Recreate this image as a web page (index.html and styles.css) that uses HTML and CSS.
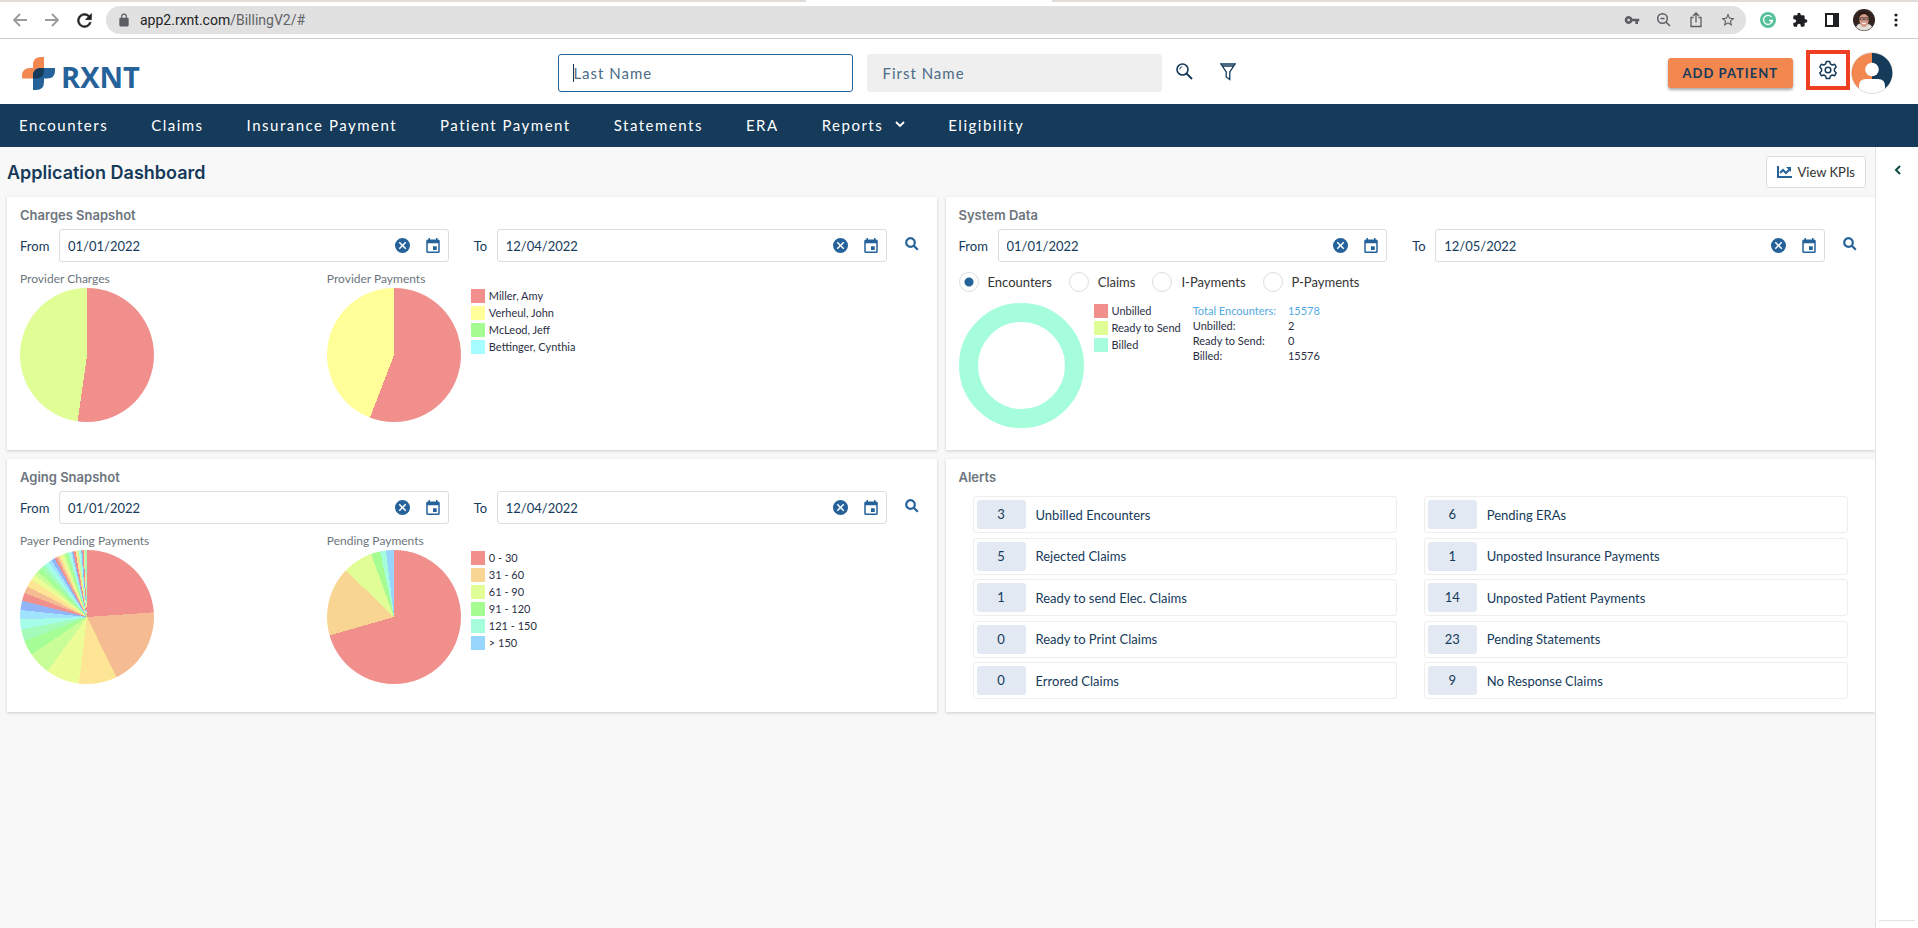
FILE: index.html
```html
<!DOCTYPE html>
<html lang="en">
<head>
    <meta charset="UTF-8">
    <meta name="viewport" content="width=device-width, initial-scale=1.0">
    <title>RXNT Billing</title>
    <link rel="stylesheet" href="styles.css">
</head>
<body>
    <!-- Shared icons -->
    <svg class="sprite" aria-hidden="true">
        <symbol id="clear" viewBox="2 2 20 20">
            <path d="M12 2a10 10 0 1 0 0 20 10 10 0 0 0 0-20zm5 13.600L15.600 17 12 13.400 8.400 17 7 15.600l3.600-3.600L7 8.400 8.400 7l3.600 3.600L15.600 7 17 8.400 13.400 12z"/>
        </symbol>
        <symbol id="calendar" viewBox="3 1 18 20">
            <path d="M17 12h-5v5h5v-5zM16 1v2H8V1H6v2H5a2 2 0 0 0-2 2v14a2 2 0 0 0 2 2h14a2 2 0 0 0 2-2V5a2 2 0 0 0-2-2h-1V1h-2zm3 18H5V8h14v11z"/>
        </symbol>
        <symbol id="search" viewBox="0 0 14 14">
            <path d="M5.500 1.200a4.300 4.300 0 1 0 0 8.600 4.300 4.300 0 0 0 0-8.600zM8.800 8.800l4 4" fill="none" stroke="currentColor" stroke-width="2.200"/>
        </symbol>
    </svg>

    <div class="tab-strip"><div class="active-tab"></div></div>
    <div class="browser-bar">
        <button class="browser-button faded" aria-label="Back"><svg width="16" height="16" viewBox="0 0 16 16"><path d="M15 8H2M8 2L2 8l6 6" fill="none" stroke="currentColor" stroke-width="1.800"/></svg></button>
        <button class="browser-button faded" aria-label="Forward"><svg width="16" height="16" viewBox="0 0 16 16"><path d="M1 8h13M8 2l6 6-6 6" fill="none" stroke="currentColor" stroke-width="1.800"/></svg></button>
        <button class="browser-button" aria-label="Reload"><svg width="21" height="21" viewBox="0 0 24 24"><path d="M17.650 6.350A8 8 0 1 0 19.730 14h-2.080A6 6 0 1 1 16.220 7.780L13 11h7V4l-2.350 2.350z" stroke="currentColor" stroke-width=".6"/></svg></button>
        <div class="address">
            <span class="address-icon"><svg width="14" height="14" viewBox="0 0 24 24"><path d="M18 8h-1V6A5 5 0 0 0 7 6v2H6a2 2 0 0 0-2 2v11a2 2 0 0 0 2 2h12a2 2 0 0 0 2-2V10a2 2 0 0 0-2-2zM9 8V6a3 3 0 0 1 6 0v2z"/></svg></span>
            <span class="url">app2.rxnt.com<span class="url-path">/BillingV2/#</span></span>
            <button class="browser-button" aria-label="Passwords"><svg width="16" height="16" viewBox="0 0 24 24"><path d="M12.650 10A6 6 0 1 0 12.650 14H17v4h4v-4h2v-4H12.650zM7 14a2 2 0 1 1 0-4 2 2 0 0 1 0 4z"/></svg></button>
            <button class="browser-button" aria-label="Zoom"><svg width="16" height="16" viewBox="0 0 16 16" fill="none" stroke="currentColor" stroke-width="1.500"><circle cx="6.500" cy="6.500" r="4.800"/><path d="M10 10l4 4M4.500 6.500h4"/></svg></button>
            <button class="browser-button" aria-label="Share"><svg width="16" height="16" viewBox="0 0 16 16" fill="none" stroke="currentColor" stroke-width="1.300"><path d="M5.500 5.500H3v9h10v-9h-2.500M8 10.500V1.500M5 4l3-3 3 3"/></svg></button>
            <button class="browser-button" aria-label="Bookmark"><svg width="16" height="16" viewBox="0 0 24 24"><path d="M22 9.240l-7.190-.62L12 2 9.190 8.630 2 9.240l5.460 4.730L5.820 21 12 17.270 18.180 21l-1.630-7.030L22 9.240zM12 15.400l-3.760 2.270 1-4.280-3.320-2.880 4.380-.38L12 6.100l1.710 4.040 4.380.38-3.320 2.880 1 4.280L12 15.400z"/></svg></button>
        </div>
        <button class="browser-button" aria-label="Writing assistant"><svg width="18" height="18" viewBox="0 0 18 18"><circle cx="9" cy="9" r="8" fill="#56c19a"/><path d="M12.500 6a4.500 4.500 0 1 0 1 3.500H10M12 11.500l1.500-2" fill="none" stroke="#fff" stroke-width="1.300"/></svg></button>
        <button class="browser-button" aria-label="Extensions"><svg width="16" height="16" viewBox="0 0 24 24"><path d="M20.500 11H19V7a2 2 0 0 0-2-2h-4V3.500a2.500 2.500 0 0 0-5 0V5H4a2 2 0 0 0-2 2v3.800h1.500a2.700 2.700 0 0 1 0 5.400H2V20a2 2 0 0 0 2 2h3.800v-1.500a2.700 2.700 0 0 1 5.400 0V22H17a2 2 0 0 0 2-2v-4h1.500a2.500 2.500 0 0 0 0-5z"/></svg></button>
        <button class="browser-button" aria-label="Side panel"><svg width="14" height="14" viewBox="0 0 14 14"><path d="M0 0h14v14H0zM2 2v10h6V2z" fill-rule="evenodd"/></svg></button>
        <button class="browser-button" aria-label="Profile">
            <svg width="22" height="22" viewBox="0 0 22 22">
                <circle cx="11" cy="11" r="11" fill="#33241f"/>
                <path d="M3 18q2-4 5-3l3 2 3-2q4 0 5 3a11 11 0 0 1-16 0z" fill="#e4dedb"/>
                <path d="M6.500 7q4.500-6 9 0v6q-1 5-4.500 5t-4.500-5z" fill="#d39a86"/>
                <path d="M6 8Q6 2 11 3q5 0 5 6-2-4-5-4T6 8z" fill="#271713"/>
                <path d="M7.500 8.500h2.800v2.300H7.500zM11.700 8.500h2.800v2.300h-2.800zM10.300 9.500h1.400" fill="none" stroke="#54454a" stroke-width=".8"/>
                <path d="M9 14q2 1.500 4 0" stroke="#fff" fill="none"/>
            </svg>
        </button>
        <button class="browser-button" aria-label="Menu"><svg width="4" height="14" viewBox="0 0 4 14"><circle cx="2" cy="2" r="1.600"/><circle cx="2" cy="7" r="1.600"/><circle cx="2" cy="12" r="1.600"/></svg></button>
    </div>

    <header class="header">
        <a class="logo" href="#">
            <svg width="33" height="33" viewBox="0 0 33 33" aria-hidden="true">
                <path d="M0 21.500V19q0-8 8-8h3V8q0-8 8-8h3v13q0 8.500-8 8.500z" fill="#f28850"/>
                <path d="M11 33V19q0-8 8-8h14v3q0 7.500-8 7.500h-3V25q0 8-8 8z" fill="#25629a"/>
                <path d="M11 21.500V19q0-8 8-8h3v2.500q0 8-8 8z" fill="#153a5a"/>
            </svg>
            <span>RXNT</span>
        </a>
        <form class="patient-search">
            <input class="name-input active" type="text" placeholder="Last Name" aria-label="Last Name">
            <input class="name-input" type="text" placeholder="First Name" aria-label="First Name">
            <button class="icon-button" type="button" aria-label="Search patients"><svg width="17" height="17" viewBox="0 0 17 17" fill="none" stroke="currentColor"><circle cx="6.500" cy="6.500" r="5.500" stroke-width="1.600"/><path d="M3.800 6.500q0-2.500 2.500-3"/><path d="M10.500 10.500l5.500 5.500" stroke-width="2"/></svg></button>
            <button class="icon-button" type="button" aria-label="Filter"><svg width="16" height="18" viewBox="0 0 16 18" fill="none" stroke="currentColor" stroke-width="1.300"><path d="M1 1h14L9.800 9v7.500L6.200 14V9zM2 3h12"/></svg></button>
        </form>
        <button class="add-patient">ADD PATIENT</button>
        <button class="settings" aria-label="Settings"><svg width="18" height="20" viewBox="0 0 18 20" fill="none" stroke="currentColor" stroke-width="1.500" stroke-linejoin="round"><path d="M7.300 1.500h3.400l.6 2.400 1.900 1.100L15.700 4.300l1.500 2.700-1.800 1.900v2.200l1.800 1.900-1.500 2.700-2.500-.7-1.900 1.100-.6 2.400H7.300l-.6-2.400-1.900-1.100-2.500.7L.8 13l1.800-1.900V8.900L.8 7l1.500-2.700 2.500.7 1.900-1.100z"/><circle cx="9" cy="10" r="2.800"/></svg></button>
        <a class="avatar" href="#" aria-label="Account"><svg width="42" height="42" viewBox="0 0 42 42"><circle cx="21" cy="21" r="20.500" fill="#fff" stroke="#ddd"/><path d="M21 1a20 20 0 0 0-13 35.500V34q0-7 7-7h6z" fill="#f28850"/><path d="M21 1a20 20 0 0 1 13 35.500V34q0-7-7-7h-6z" fill="#153a5a"/><circle cx="21" cy="17.500" r="6.800" fill="#fff"/></svg></a>
    </header>

    <nav class="nav">
        <a href="#">Encounters</a>
        <a href="#">Claims</a>
        <a href="#">Insurance Payment</a>
        <a href="#">Patient Payment</a>
        <a href="#">Statements</a>
        <a href="#">ERA</a>
        <a href="#">Reports <svg width="10" height="7" viewBox="0 0 10 7"><path d="M1 1l4 4 4-4" fill="none" stroke="currentColor" stroke-width="1.800"/></svg></a>
        <a href="#">Eligibility</a>
    </nav>

    <div class="page">
        <main class="dashboard">
            <div class="title-row">
                <h1 class="title">Application Dashboard</h1>
                <button class="kpi-button"><svg width="15" height="12" viewBox="0 0 15 12"><path d="M1 0v11h14M3 7l3-3 3 3 4-4" fill="none" stroke="currentColor" stroke-width="2"/><path d="M9 1h5v5z" fill="currentColor"/></svg>View KPIs</button>
            </div>

            <div class="cards">
                <section class="card">
                    <h2 class="card-title">Charges Snapshot</h2>
                    <div class="dates">
                        <label class="from" for="charges-from">From</label>
                        <div class="date-field">
                            <input id="charges-from" type="text" value="01/01/2022">
                            <button aria-label="Clear"><svg width="15" height="15"><use href="#clear"/></svg></button>
                            <button aria-label="Pick date"><svg width="14" height="15"><use href="#calendar"/></svg></button>
                        </div>
                        <label class="to" for="charges-to">To</label>
                        <div class="date-field">
                            <input id="charges-to" type="text" value="12/04/2022">
                            <button aria-label="Clear"><svg width="15" height="15"><use href="#clear"/></svg></button>
                            <button aria-label="Pick date"><svg width="14" height="15"><use href="#calendar"/></svg></button>
                        </div>
                        <button class="date-search" aria-label="Search"><svg width="14" height="14"><use href="#search"/></svg></button>
                    </div>
                    <div class="charts">
                        <div class="chart">
                            <h3 class="chart-title">Provider Charges</h3>
                            <div class="pie provider-charges"></div>
                        </div>
                        <div class="chart">
                            <h3 class="chart-title">Provider Payments</h3>
                            <div class="chart-body">
                                <div class="pie provider-payments"></div>
                                <ul class="legend">
                                    <li><span class="swatch red"></span>Miller, Amy</li>
                                    <li><span class="swatch yellow"></span>Verheul, John</li>
                                    <li><span class="swatch green"></span>McLeod, Jeff</li>
                                    <li><span class="swatch cyan"></span>Bettinger, Cynthia</li>
                                </ul>
                            </div>
                        </div>
                    </div>
                </section>

                <section class="card">
                    <h2 class="card-title">System Data</h2>
                    <div class="dates">
                        <label class="from" for="system-from">From</label>
                        <div class="date-field">
                            <input id="system-from" type="text" value="01/01/2022">
                            <button aria-label="Clear"><svg width="15" height="15"><use href="#clear"/></svg></button>
                            <button aria-label="Pick date"><svg width="14" height="15"><use href="#calendar"/></svg></button>
                        </div>
                        <label class="to" for="system-to">To</label>
                        <div class="date-field">
                            <input id="system-to" type="text" value="12/05/2022">
                            <button aria-label="Clear"><svg width="15" height="15"><use href="#clear"/></svg></button>
                            <button aria-label="Pick date"><svg width="14" height="15"><use href="#calendar"/></svg></button>
                        </div>
                        <button class="date-search" aria-label="Search"><svg width="14" height="14"><use href="#search"/></svg></button>
                    </div>
                    <div class="radios">
                        <label><input type="radio" name="system" checked>Encounters</label>
                        <label><input type="radio" name="system">Claims</label>
                        <label><input type="radio" name="system">I-Payments</label>
                        <label><input type="radio" name="system">P-Payments</label>
                    </div>
                    <div class="chart-body">
                        <div class="donut"></div>
                        <ul class="legend">
                            <li><span class="swatch red"></span>Unbilled</li>
                            <li><span class="swatch lime"></span>Ready to Send</li>
                            <li><span class="swatch aqua"></span>Billed</li>
                        </ul>
                        <table class="totals">
                            <tr class="total"><th>Total Encounters:</th><td>15578</td></tr>
                            <tr><th>Unbilled:</th><td>2</td></tr>
                            <tr><th>Ready to Send:</th><td>0</td></tr>
                            <tr><th>Billed:</th><td>15576</td></tr>
                        </table>
                    </div>
                </section>

                <section class="card">
                    <h2 class="card-title">Aging Snapshot</h2>
                    <div class="dates">
                        <label class="from" for="aging-from">From</label>
                        <div class="date-field">
                            <input id="aging-from" type="text" value="01/01/2022">
                            <button aria-label="Clear"><svg width="15" height="15"><use href="#clear"/></svg></button>
                            <button aria-label="Pick date"><svg width="14" height="15"><use href="#calendar"/></svg></button>
                        </div>
                        <label class="to" for="aging-to">To</label>
                        <div class="date-field">
                            <input id="aging-to" type="text" value="12/04/2022">
                            <button aria-label="Clear"><svg width="15" height="15"><use href="#clear"/></svg></button>
                            <button aria-label="Pick date"><svg width="14" height="15"><use href="#calendar"/></svg></button>
                        </div>
                        <button class="date-search" aria-label="Search"><svg width="14" height="14"><use href="#search"/></svg></button>
                    </div>
                    <div class="charts">
                        <div class="chart">
                            <h3 class="chart-title">Payer Pending Payments</h3>
                            <div class="pie payer-pending"></div>
                        </div>
                        <div class="chart">
                            <h3 class="chart-title">Pending Payments</h3>
                            <div class="chart-body">
                                <div class="pie pending-payments"></div>
                                <ul class="legend">
                                    <li><span class="swatch red"></span>0 - 30</li>
                                    <li><span class="swatch orange"></span>31 - 60</li>
                                    <li><span class="swatch lime"></span>61 - 90</li>
                                    <li><span class="swatch green"></span>91 - 120</li>
                                    <li><span class="swatch aqua"></span>121 - 150</li>
                                    <li><span class="swatch blue"></span>&gt; 150</li>
                                </ul>
                            </div>
                        </div>
                    </div>
                </section>

                <section class="card">
                    <h2 class="card-title">Alerts</h2>
                    <div class="alerts">
                        <a class="alert" href="#"><span class="count">3</span>Unbilled Encounters</a>
                        <a class="alert" href="#"><span class="count">6</span>Pending ERAs</a>
                        <a class="alert" href="#"><span class="count">5</span>Rejected Claims</a>
                        <a class="alert" href="#"><span class="count">1</span>Unposted Insurance Payments</a>
                        <a class="alert" href="#"><span class="count">1</span>Ready to send Elec. Claims</a>
                        <a class="alert" href="#"><span class="count">14</span>Unposted Patient Payments</a>
                        <a class="alert" href="#"><span class="count">0</span>Ready to Print Claims</a>
                        <a class="alert" href="#"><span class="count">23</span>Pending Statements</a>
                        <a class="alert" href="#"><span class="count">0</span>Errored Claims</a>
                        <a class="alert" href="#"><span class="count">9</span>No Response Claims</a>
                    </div>
                </section>
            </div>
        </main>
        <aside class="side-panel">
            <button class="expand" aria-label="Expand panel"><svg width="7" height="10" viewBox="0 0 7 10"><path d="M6 1L2 5l4 4" fill="none" stroke="currentColor" stroke-width="2"/></svg></button>
        </aside>
    </div>
</body>
</html>
```

FILE: styles.css
```css
* {
    box-sizing: border-box;
}
body {
    display: flex;
    flex-direction: column;
    min-height: 100vh;
    margin: 0;
    background: #f8f8f8;
    color: #153a5a;
    font-family: Lato, sans-serif;
    font-size: 13px;
}
button {
    padding: 0;
    border: none;
    background: none;
    color: inherit;
    font-family: inherit;
    cursor: pointer;
}
input {
    font-family: inherit;
    color: inherit;
}
a {
    color: inherit;
    text-decoration: none;
}
svg {
    display: block;
}
svg:not([fill]) {
    fill: currentColor;
}
.sprite {
    position: absolute;
    width: 0;
    height: 0;
}

/* Browser bar */
.tab-strip {
    height: 2px;
    padding-left: 42%;
    background: #e2dcd8;
}
.active-tab {
    width: 246px;
    height: 2px;
    background: #fff;
}
.browser-bar {
    display: flex;
    align-items: center;
    height: 37px;
    padding: 0 6px 0 4px;
    border-bottom: 1px solid #ccc;
    background: #fff;
    color: #1f2024;
}
.browser-button {
    display: flex;
    align-items: center;
    justify-content: center;
    width: 32px;
    height: 28px;
}
.faded {
    color: #9b9b9b;
}
.address {
    display: flex;
    align-items: center;
    flex: 1;
    height: 28px;
    margin: 0 6px;
    padding: 0 2px;
    border-radius: 14px;
    background: #e1e1e1;
    color: #5d5e63;
}
.address-icon {
    display: flex;
    justify-content: center;
    width: 32px;
}
.url {
    flex: 1;
    color: #222326;
    font-family: Roboto, sans-serif;
    font-size: 14px;
}
.url-path {
    color: #626368;
}

/* Header */
.header {
    display: flex;
    align-items: center;
    height: 65px;
    padding: 3px 25px 0 0;
    background: #fff;
}
.logo {
    display: flex;
    align-items: center;
    flex: 0 0 29.5%;
    gap: 6px;
    padding-left: 22px;
    color: #25629a;
    font-family: "Open Sans", sans-serif;
    font-size: 29px;
    font-weight: bold;
    line-height: 33px;
}
.logo span {
    padding-top: 7px;
}
.patient-search {
    display: flex;
    align-items: center;
    flex: 1;
}
.name-input {
    flex: 0 0 26.6%;
    height: 38px;
    margin-right: 14px;
    padding: 0 14px;
    border: 1px solid #efefef;
    border-radius: 3px;
    background: #efefef;
    font-size: 15px;
    letter-spacing: 1px;
}
.name-input::placeholder {
    color: #4c6b86;
}
.name-input.active {
    border-color: #25629a;
    background: linear-gradient(#153a5a, #153a5a) no-repeat 14px 9px / 1px 18px #fff;
}
.icon-button {
    width: 16px;
    margin: 0 28px 3px 0;
}
.add-patient {
    height: 30px;
    padding: 0 15px;
    border-radius: 3px;
    background: #f28850;
    box-shadow: 0 2px 3px #aaa;
    font-size: 13px;
    font-weight: bold;
    letter-spacing: 1px;
}
.settings {
    display: flex;
    align-items: center;
    justify-content: center;
    width: 44px;
    height: 40px;
    margin: 0 1px 6px 13px;
    border: 4px solid #ef3f23;
}

/* Navigation */
.nav {
    display: flex;
    align-items: center;
    gap: 43px;
    height: 43px;
    padding: 0 0 2px 19px;
    background: #153a5a;
    color: #fff;
    font-size: 15px;
    letter-spacing: 1.5px;
}
.nav a {
    display: flex;
    align-items: center;
    gap: 12px;
}

/* Page */
.page {
    display: flex;
    flex: 1;
}
.dashboard {
    flex: 1;
    padding-left: 7px;
}
.title-row {
    display: flex;
    align-items: center;
    justify-content: space-between;
    height: 50px;
    padding-right: 9px;
}
.title {
    margin: 0;
    font-family: Inter, sans-serif;
    font-size: 18px;
    font-weight: 600;
}
.kpi-button {
    display: flex;
    align-items: center;
    gap: 6px;
    height: 32px;
    padding: 0 10px;
    border: 1px solid #ddd;
    border-radius: 3px;
    background: #fff;
    color: #333;
    font-size: 13px;
}
.kpi-button svg {
    color: #25629a;
}
.cards {
    display: grid;
    grid-template-columns: 1fr 1fr;
    grid-auto-rows: 253px;
    gap: 9px;
}
.card {
    display: flex;
    flex-direction: column;
    padding: 9px 14px 13px 13px;
    background: #fff;
    box-shadow: 0 1px 3px #ccc;
}
.card-title {
    margin: 0;
    color: #6c757d;
    font-family: Inter, sans-serif;
    font-size: 13px;
    font-weight: 600;
    line-height: 18px;
}
.dates {
    display: flex;
    align-items: center;
    margin-top: 5px;
}
.from {
    width: 39px;
}
.to {
    width: 48px;
    padding-left: 25px;
}
.date-field {
    display: flex;
    align-items: center;
    flex: 1;
    gap: 16px;
    height: 33px;
    padding: 0 8px;
    border: 1px solid #ddd;
    border-radius: 3px;
    color: #25629a;
}
.date-field input {
    flex: 1;
    min-width: 0;
    padding: 0;
    border: none;
    color: #153a5a;
    font-size: 13px;
}
.date-search {
    margin: 0 4px 3px 18px;
    color: #25629a;
}

/* Charts */
.charts {
    display: flex;
    margin-top: 8px;
}
.chart {
    flex: 1;
}
.chart:first-child {
    flex: 0 0 34%;
}
.chart-title {
    margin: 0;
    color: #6c757d;
    font-size: 12px;
    font-weight: normal;
    line-height: 18px;
}
.chart-body {
    display: flex;
}
.pie {
    width: 134px;
    height: 134px;
    border-radius: 50%;
}
.provider-charges {
    background: conic-gradient(#f08f8b 188deg, #e0fd96 0);
}
.provider-payments {
    background: conic-gradient(#f08f8b 201deg, #fffe98 0);
}
.pending-payments {
    background: conic-gradient(#f08f8b 254deg, #f8d592 0 314deg, #e0fd96 0 340deg, #a5fd92 0 348deg, #a5fddc 0 353deg, #98d5fc 0);
}
.payer-pending {
    background: conic-gradient(
        #f08f8b 86deg, #f5bb92 0 154deg, #fde595 0 187deg, #ecfd97 0 216deg, #c9fd97 0 236deg,
        #a5fd95 0 249deg, #a5fbb9 0 259deg, #a5fde8 0 268deg, #a0e3fc 0 276deg, #92b5f8 0 284deg,
        #f08f8b 0 291deg, #f5bb92 0 297deg, #fde595 0 304deg, #ecfd97 0 309deg, #c9fd97 0 313deg,
        #a5fd95 0 317deg, #a5fbb9 0 321deg, #a5fde8 0 325deg, #a0e3fc 0 328deg, #92b5f8 0 331deg,
        #f08f8b 0 333deg, #f5bb92 0 335deg, #fde595 0 337deg, #ecfd97 0 339deg, #c9fd97 0 341deg,
        #a5fd95 0 343deg, #a5fbb9 0 344deg, #a5fde8 0 346deg, #a0e3fc 0 347deg, #92b5f8 0 348deg,
        #f08f8b 0 350deg, #fde595 0 352deg, #c9fd97 0 353deg, #a5fde8 0 355deg, #92b5f8 0 356deg,
        #f08f8b 0 357deg, #fde595 0 358deg, #a5fbb9 0);
}
.donut {
    width: 125px;
    height: 125px;
    border: 19px solid #a5fddc;
    border-radius: 50%;
}
.legend {
    margin: 0 0 0 10px;
    padding: 0;
    list-style-type: none;
    color: #2b2f45;
    font-size: 11px;
}
.legend li {
    display: flex;
    align-items: center;
    gap: 4px;
    height: 17px;
    padding-bottom: 2px;
}
.swatch {
    width: 14px;
    height: 14px;
}
.red {
    background: #f08f8b;
}
.orange {
    background: #f8d592;
}
.yellow {
    background: #fffe98;
}
.lime {
    background: #e0fd96;
}
.green {
    background: #a5fd92;
}
.aqua {
    background: #a5fddc;
}
.cyan {
    background: #a5fdff;
}
.blue {
    background: #98d5fc;
}

/* System data */
.radios {
    display: flex;
    gap: 17px;
    height: 41px;
    padding-bottom: 1px;
    color: #333;
}
.radios label {
    display: flex;
    align-items: center;
    gap: 9px;
}
.radios input {
    width: 20px;
    height: 20px;
    margin: 0;
    border: 1px solid #ddd;
    border-radius: 50%;
    appearance: none;
}
.radios input:checked {
    background: radial-gradient(#25629a 4px, #fff 5px);
}
.totals {
    align-self: flex-start;
    margin-left: 12px;
    border-spacing: 0;
    color: #2b2f45;
    font-size: 11px;
    line-height: 15px;
}
.totals th {
    padding: 0 12px 0 0;
    font-weight: normal;
    text-align: left;
}
.totals td {
    padding: 0;
}
.totals .total {
    color: #54a9e2;
}

/* Alerts */
.alerts {
    display: grid;
    flex: 1;
    grid-template-columns: 1fr 1fr;
    grid-auto-rows: 37px;
    align-content: space-between;
    column-gap: 27px;
    padding: 10px 13px 0 14px;
}
.alert {
    display: flex;
    align-items: center;
    gap: 10px;
    padding: 3px;
    border: 1px solid #eee;
    border-radius: 3px;
}
.count {
    width: 49px;
    border-radius: 3px;
    background: #e2e9f3;
    line-height: 29px;
    text-align: center;
}

/* Side panel */
.side-panel {
    display: flex;
    flex-direction: column;
    width: 43px;
    padding: 18px 3px 7px;
    border-left: 1px solid #e2e2e2;
    background: #fff;
}
.expand {
    display: flex;
    justify-content: center;
    flex: 1;
    border-bottom: 1px solid #e2e2e2;
    color: #0d4a44;
}
```
